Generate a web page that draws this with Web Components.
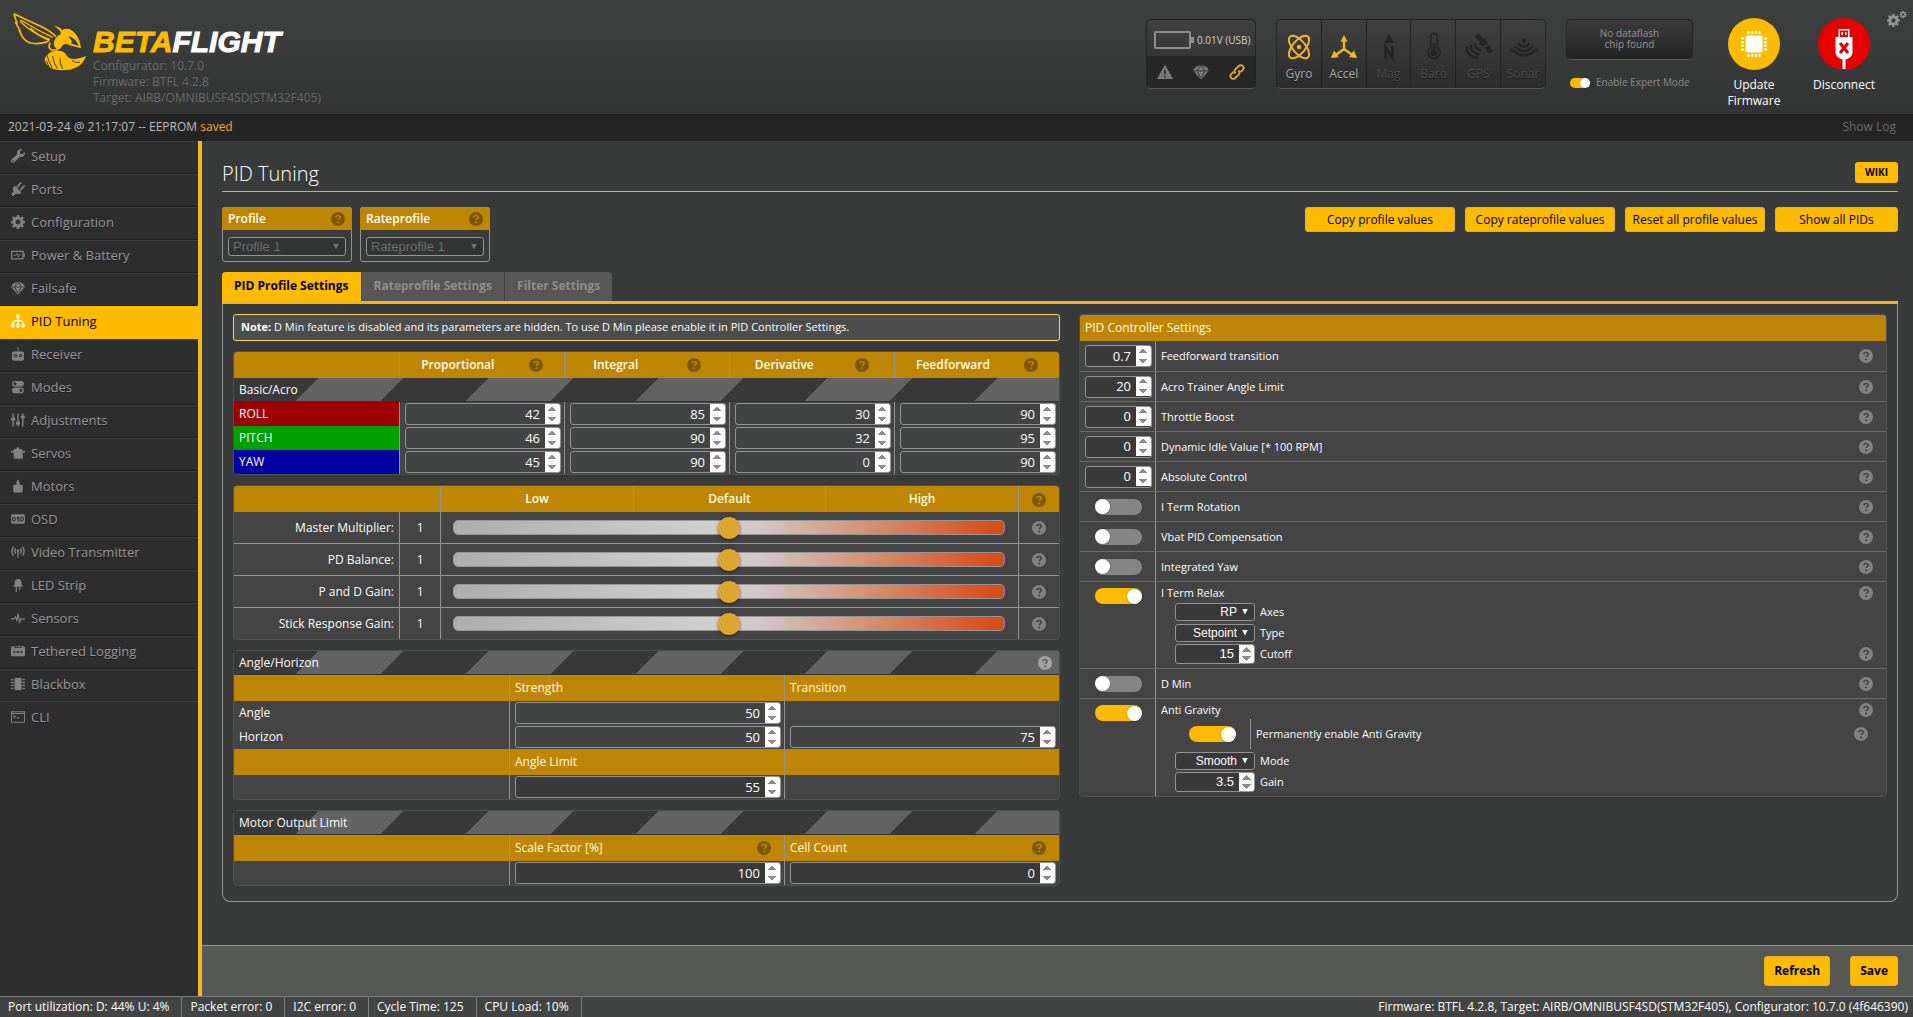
<!DOCTYPE html>
<html lang="en">
<head>
<meta charset="utf-8">
<title>Betaflight Configurator</title>
<style>
  html { background: #393b3a; }
  body {
    margin: 0; min-height: 100vh; display: flex; flex-direction: column;
    font-family: "Open Sans", "Noto Sans", sans-serif; font-size: 12px; line-height: 16px; color: #fff;
    --accent: #ffbb00; --gold: #bf8605; --line: #949494;
  }
  .middle { flex: 1; display: flex; }
  .content { flex: 1; min-width: 0; display: flex; flex-direction: column; }
  bf-pid-tab { flex: 1; }
</style>
</head>
<body>
  <bf-header></bf-header>
  <bf-log><span>2021-03-24 @ 21:17:07 -- EEPROM <span style="color:#ffa834">saved</span></span></bf-log>
  <div class="middle">
    <bf-sidebar active="PID Tuning"></bf-sidebar>
    <main class="content">
      <bf-pid-tab></bf-pid-tab>
      <bf-toolbar></bf-toolbar>
    </main>
  </div>
  <bf-status></bf-status>

<script>
const ICONS = {
  wrench: '<path fill="currentColor" d="M15.6 3.5 13 6.100l-2.300-.6-.6-2.300L12.700.600C10.700-.2 8.300.5 7.200 2.500c-.6 1.100-.6 2.300-.2 3.400L.8 11.800a2 2 0 0 0 0 3.200 2 2 0 0 0 3 0L10 9c2.500.8 5.200-.7 5.800-3.200.2-.8.1-1.600-.2-2.300zM2.400 14.400a.9.900 0 1 1 0-1.800.9.900 0 0 1 0 1.800z"/>',
  plug: '<path fill="currentColor" d="M4 4 12 12c-1.500 1.800-4.300 2.400-6.500 1.300L3 15.700 2 16l-2-2 2.800-3C1.500 8.500 2 6 4 4z"/><path stroke="currentColor" stroke-width="2" stroke-linecap="round" d="M7 6l4-5M11 9l4-4.500"/>',
  cog: '<path fill="currentColor" fill-rule="evenodd" d="M6.700 0h2.600l.4 2.200 1.400.6L13 1.500 14.700 3.200l-1.300 1.800.6 1.500 2.100.3v2.500l-2.100.4-.6 1.400 1.300 1.900-1.800 1.700-1.800-1.300-1.400.6-.4 2.100H6.700L6.300 14l-1.400-.6L3 14.700 1.300 13l1.300-1.900L2 9.700l-2.100-.4V6.800L2 6.500 2.600 5 1.300 3.200 3 1.500l1.900 1.300 1.400-.6zM8 5.200A2.800 2.800 0 1 0 8 10.800 2.800 2.800 0 0 0 8 5.200z"/>',
  battery: '<path fill="none" stroke="currentColor" stroke-width="1.500" d="M.8 3.800h12.800v8.600H.8zM15.200 6v4"/><path fill="none" stroke="currentColor" d="M3 8.500h2.200L6.500 6l1.700 4 1.300-2.500h2"/>',
  chute: '<path fill="currentColor" d="M.5 7C.5 3.800 4 1.500 8 1.500S15.500 3.800 15.500 7L8.700 15H7.300z"/><path stroke="#2e2e2e" stroke-width=".9" fill="none" d="M1 7.500q2-2 3.600 0 1.700-2 3.400 0 1.700-2 3.400 0Q13 5.500 15 7.500M4.600 7.500 7.500 14M11.400 7.500 8.500 14M4.600 7Q5 3 8 2M11.400 7Q11 3 8 2"/>',
  tree: '<g fill="none" stroke="currentColor" stroke-width="1.500"><circle cx="8" cy="2.500" r="1.600"/><circle cx="2.200" cy="13.400" r="1.500"/><circle cx="8" cy="13.400" r="1.500"/><circle cx="13.800" cy="13.400" r="1.500"/><path d="M8 4v8M2.300 12V9.500L5 7.500h6l2.700 2V12"/></g>',
  receiver: '<path fill="currentColor" fill-rule="evenodd" d="M7.400 0h1.200v5H13q1.800 0 1.800 1.800V14q0 1.600-1.800 1.600H3Q1.200 15.600 1.200 14V6.800Q1.200 5 3 5h4.400zM5 8a2 2 0 1 0 0 4 2 2 0 0 0 0-4zm6 0a2 2 0 1 0 0 4 2 2 0 0 0 0-4z"/><circle cx="5" cy="10" r=".9" fill="currentColor"/><circle cx="11" cy="10" r=".9" fill="currentColor"/>',
  modes: '<path fill="currentColor" fill-rule="evenodd" d="M4.500 1h7a3.200 3.200 0 0 1 0 6.500h-7a3.200 3.200 0 0 1 0-6.500zm0 1.500a1.700 1.700 0 1 0 0 3.400 1.700 1.700 0 0 0 0-3.400zM4.500 8.700h7a3.200 3.200 0 0 1 0 6.500h-7a3.200 3.200 0 0 1 0-6.500zm7 1.500a1.700 1.700 0 1 0 0 3.400 1.700 1.700 0 0 0 0-3.400z"/>',
  sliders: '<path stroke="currentColor" stroke-width="1.600" d="M2.500.5v15M8 .5v15M13.500.5v15"/><path fill="currentColor" d="M.2 5.500h4.600v3H.2zM5.700 10h4.600v3H5.700zM11.200 3h4.600v3h-4.600z"/>',
  servo: '<path fill="currentColor" d="M6.500 1.500h2l1 2h3V5.500H16v2h-2.500V13q0 1.500-1.500 1.500H4.500Q3 14.500 3 13V7.500H0v-2h3v-2h3z"/>',
  motor: '<path fill="currentColor" d="M8 .500 9.800 3.500V6.500H12q1.400 0 1.400 1.500v5.500Q13.400 15.500 12 15.500H4q-1.400 0-1.400-1.500V8q0-1.500 1.400-1.500h2.200v-3z"/>',
  osd: '<path fill="currentColor" d="M2 2.500h12q2 0 2 2v7q0 2-2 2H2q-2 0-2-2v-7q0-2 2-2z"/><g fill="none" stroke="#2e2e2e" stroke-width="1.200"><rect x="1.800" y="6" width="3" height="4.200" rx="1.300"/><path d="M9.500 6.200H7.200v1.600h2v2.400H6.800M11.500 6h1.200q1.600.3 1.600 2.100t-1.600 2.100h-1.200z"/></g>',
  antenna: '<g fill="none" stroke="currentColor" stroke-width="1.500"><path d="M3 2Q-1 7 3 12.500M13 2q4 5 0 10.500M5.300 4Q3 7 5.300 10.200M10.700 4q2.300 3 0 6.200M8 7v7.500"/></g><circle cx="8" cy="6.500" r="1.500" fill="currentColor"/>',
  led: '<path fill="currentColor" d="M4 5.500a4 4.500 0 0 1 8 0V8h1v2H3V8h1z"/><path stroke="currentColor" stroke-width="1.300" d="M6 10v6M10 10v4"/>',
  pulse: '<path fill="none" stroke="currentColor" stroke-width="1.300" d="M0 9h3.500l1.700-2.500 1.600 5L8 3l2 10 1.600-4H16"/>',
  logging: '<path fill="currentColor" fill-rule="evenodd" d="M0 3.500 1.500 2.500H4v2h8v-2h2.500L16 3.500v9q0 1.500-1.500 1.500h-13Q0 14 0 12.500zM3 8v2h2V8zm3.500 0v2h3V8zM11 8v2h2V8z"/><path fill="currentColor" d="M5.200 2h1.300v1.700H5.200zM7.500 2H11v1.700H7.500z"/>',
  chip: '<path fill="currentColor" d="M4 1h8v14H4z"/><path stroke="currentColor" stroke-width="1.500" d="M0 3h3M0 6.300h3M0 9.600h3M0 13h3M13 3h3M13 6.300h3M13 9.600h3M13 13h3"/>',
  cli: '<path fill="none" stroke="currentColor" stroke-width="1.200" d="M.6 2h14.800v12H.6zM.6 4h14.800M3 5.800l2 1.700-2 1.700M6.500 9h3"/>',
  warn: '<path fill="currentColor" fill-rule="evenodd" d="M8 .8 16 15H0zM7.200 6v4.800h1.600V6zm0 6v1.600h1.600V12z"/>',
  link: '<g fill="none" stroke="currentColor" stroke-width="1.800"><path d="M6.500 9.500C5 8 5.300 6.500 6.500 5.200L9.800 2c1.300-1.300 3-1.200 4 0s1.100 2.700 0 3.900L11.500 8.200"/><path d="M9.500 6.500C11 8 10.700 9.500 9.500 10.800L6.200 14c-1.300 1.300-3 1.200-4 0s-1.100-2.700 0-3.900L4.500 7.800"/></g>',
  gyro: '<g fill="none" stroke="currentColor" stroke-width="1.400"><ellipse cx="8" cy="8" rx="10" ry="4.600" transform="rotate(50 8 8)"/><ellipse cx="8" cy="8" rx="10" ry="4.600" transform="rotate(-50 8 8)"/></g><circle cx="8" cy="8" r="1.600" fill="currentColor"/>',
  accel: '<path fill="none" stroke="currentColor" stroke-width="1.700" d="M8 3v6.500L2.500 13.500M8 9.500l5.500 4"/><path fill="currentColor" d="M8-.8l2.500 5h-5zM-1.600 16l2.500-5.500 3.400 5zM17.600 16l-2.500-5.500-3.400 5z"/>',
  mag: '<path fill="currentColor" d="M8-2l3.500 7H4.500z"/><path fill="none" stroke="currentColor" stroke-width="1.900" d="M5.500 17V8.500L10.500 16V7.500"/>',
  baro: '<path fill="none" stroke="currentColor" stroke-width="1.300" d="M5.600 8.500V.5a2.400 2.400 0 0 1 4.800 0v8a4.300 4.300 0 1 1-4.800 0z"/><circle cx="8" cy="12.200" r="2.600" fill="currentColor"/><path stroke="currentColor" stroke-width="1.600" d="M8 5v6"/>',
  gps: '<path fill="currentColor" d="M4.500 0 8-1.500l3 3.500L8.800 4.200zM9 3.500 12.500 1.500 14.500 6 10 7.500 8 5.500zM12 8l3.500-1L18 11.500l-3 1z"/><g fill="none" stroke="currentColor" stroke-width="1.700"><path d="M5 5.500Q5 9.500 9.500 10.500M2 6.500q0 6 6.500 7M-1 7.500q0 8 8.500 8.500"/></g>',
  sonar: '<circle cx="8" cy="3.500" r="1.500" fill="currentColor"/><g fill="none" stroke="currentColor" stroke-width="1.900"><path d="M4.200 5.500Q8 10 11.800 5.500M1.500 7.500q6.500 7 13 0M-1.500 9.500q9.500 9 19 0"/></g>'
};
const svg = (name, size) => `<svg viewBox="0 0 16 16" width="${size}" height="${size}" overflow="visible" aria-hidden="true">${ICONS[name]}</svg>`;

/* Base class: renders the subclass markup and styles into an open shadow root. */
class BfElement extends HTMLElement {
  connectedCallback() {
    if (this.shadowRoot) return;
    const root = this.attachShadow({ mode: 'open' });
    const t = document.createElement('template');
    t.innerHTML = `<style>:host,*{box-sizing:border-box}${this.css()}</style>${this.html()}`;
    root.append(t.content.cloneNode(true));
  }
}

const CONTROLS = `
  button { font: inherit; color: #000; background: var(--accent); border: 1px solid #e8b028; border-radius: 3px; margin: 0; padding: 0; cursor: pointer; }
  input[type=number] {
    display: block; width: 100%; height: 22px; margin: 0; padding: 0 0 1px 4px;
    font: 13px/19px "Open Sans", sans-serif; color: #fff; text-align: right;
    background: #424443; border: 1px solid var(--line); border-radius: 3px; outline: none;
  }
  input[type=number].dark { background: #393939; }
  input[type=number]::-webkit-inner-spin-button { opacity: 1; margin-left: 5px; height: 20px; }
  .pick { display: inline-grid; align-items: center; }
  .pick > * { grid-area: 1 / 1; }
  .pick::after { content: ""; grid-area: 1 / 1; justify-self: end; width: 6px; height: 6px; margin-right: 7px; background: var(--arrow, #fff); clip-path: polygon(0 0, 100% 0, 50% 100%); pointer-events: none; }
  select { appearance: none; width: 100%; margin: 0; font-family: "Liberation Sans", Arial, sans-serif; color: #fff; background: #393939; border: 1px solid var(--line); border-radius: 3px; opacity: 1; }
`;

/* Round question mark badge. */
customElements.define('bf-help', class extends BfElement {
  css() { return `
    :host { display: inline-block; width: 14px; height: 14px; flex: none; color: #828282; --mark: #434443; }
    :host([tone=gold]) { color: #7c5603; --mark: #bf8605; }
    :host([tone=light]) { color: #a3a3a3; --mark: #5f5f5f; }
    svg { display: block; }`; }
  html() { return `<svg viewBox="0 0 14 14" width="14" height="14" role="img" aria-label="Help"><circle cx="7" cy="7" r="7" fill="currentColor"/><path d="M4.900 5.400C5 4.100 5.900 3.500 7 3.500s2.200.6 2.200 1.700c0 1.400-1.900 1.400-1.900 2.900" fill="none" stroke="var(--mark)" stroke-width="1.700"/><circle cx="7.200" cy="10.300" r="1.100" fill="var(--mark)"/></svg>`; }
});

/* On/off switch built on a real checkbox. */
customElements.define('bf-toggle', class extends BfElement {
  css() { return `
    :host { display: inline-block; width: 47px; height: 16px; flex: none; --knob: 15px; }
    :host([small]) { width: 20px; height: 10px; --knob: 10px; }
    input { appearance: none; display: flex; align-items: center; width: 100%; height: 100%; margin: 0; border-radius: 8px; background: #858585; cursor: pointer; }
    input::before { content: ""; width: var(--knob); height: var(--knob); border-radius: 50%; background: #fff; box-shadow: 0 0 2px #0006; }
    input:checked { background: var(--accent); justify-content: flex-end; }`; }
  html() { return `<input type="checkbox" aria-label="${this.getAttribute('label')}" ${this.hasAttribute('on') ? 'checked' : ''}>`; }
});

customElements.define('bf-header', class extends BfElement {
  css() { return `
    :host { display: flex; height: 114px; background: linear-gradient(#3f4140, #333534); color: #949494; }
    .brand { display: flex; padding: 12px 0 0 12px; flex: 1; }
    .name { padding-left: 5px; color: #6a6a6a; }
    .word { font: italic bold 30px/32px "Liberation Sans", Arial, sans-serif; color: #fff; -webkit-text-stroke: 1px; margin-top: 14px; }
    .word b { color: var(--accent); }
    .info { display: flex; gap: 20px; padding-top: 19px; }
    .box { border: 1px solid #252525; border-bottom-color: #5a5a5a; border-radius: 5px; background: linear-gradient(#414141, #2c2c2c); overflow: hidden; }
    .power { width: 110px; height: 70px; display: flex; flex-direction: column; }
    .volts { flex: 1; display: flex; align-items: center; gap: 3px; padding: 4px 0 0 7px; font-size: 10px; color: #d0d0d0; white-space: nowrap; }
    .flags { height: 32px; display: flex; align-items: center; justify-content: space-around; background: #272727; color: #7a7a7a; }
    .flags svg:last-child { color: #e0ac26; }
    .sensors { width: 270px; height: 70px; display: flex; }
    .sensor { flex: 1; display: flex; flex-direction: column; align-items: center; gap: 8px; padding-top: 16px; border-left: 1px solid #222; color: #242424; }
    .sensor:first-child { border: 0; }
    .sensor svg { margin: 0 0 0 1px; }
    .sensor span { color: #4c4c4c; text-shadow: 0 1px #1c1c1c; }
    .sensor.on { color: #f0b72b; }
    .sensor.on span { color: #adadad; }
    .flash { width: 127px; font-size: 10px; line-height: 11px; text-align: center; }
    .flash .box { height: 41px; padding-top: 8px; color: #949494; background: linear-gradient(#3c3c3c, #222); }
    .expert { display: flex; align-items: center; gap: 6px; padding: 17px 0 0 4px; white-space: nowrap; color: #8c8c8c; }
    .acts { display: flex; gap: 30px; padding: 18px 0 0 31px; align-items: flex-start; }
    .acts button { width: 60px; padding: 0; border: 0; background: none; font: inherit; color: #fff; display: flex; flex-direction: column; align-items: center; gap: 7px; cursor: pointer; }
    .gears { padding: 11px 6px 0 13px; color: #949494; }`; }
  html() {
    const sensors = [['gyro','Gyro',1],['accel','Accel',1],['mag','Mag'],['baro','Baro'],['gps','GPS'],['sonar','Sonar']];
    return `
    <div class="brand">
      <svg width="76" height="60" viewBox="36 36 228 180" aria-hidden="true" fill="none" stroke="#ffbb00" stroke-width="5" stroke-linejoin="round">
        <path d="M42 41L51 70L47 68L60 92L58 92L68 112Q80 127 92 129Q122 134 146 124M42 41Q76 58 112 74Q150 90 168 110"/>
        <path stroke-width="4" d="M60 64Q92 96 148 122M62 60Q110 90 158 112M92 84Q112 108 150 118"/>
        <path stroke="none" fill="#ffbb00" d="M162 77Q180 80 186 90Q206 80 224 98Q240 116 243 145L209 136Q196 128 187 137Q180 152 169 146Q158 136 163 122Q169 108 182 102Q186 94 162 77Z"/>
        <path stroke="none" fill="#393b3a" d="M204 109Q226 112 236 138L212 130Q222 126 204 109Z"/>
        <path d="M151 128Q142 142 154 150L174 150"/>
        <path stroke="none" fill="#ffbb00" d="M134 178Q142 152 172 152Q194 152 201 168Q214 186 258 168Q244 212 182 211Q138 208 134 178Z"/>
        <path stroke="#393b3a" stroke-width="3" d="M140 164Q146 184 156 203M158 168Q160 190 172 206M180 176Q178 190 188 206M139 182L148 203M216 181Q224 190 240 187"/>
      </svg>
      <div class="name">
        <div class="word"><b>BETA</b>FLIGHT</div>
        <div>Configurator: 10.7.0</div><div>Firmware: BTFL 4.2.8</div><div>Target: AIRB/OMNIBUSF4SD(STM32F405)</div>
      </div>
    </div>
    <div class="info">
      <div class="box power">
        <div class="volts"><svg width="40" height="18" viewBox="0 0 40 18"><rect x="1" y="1" width="35" height="16" rx="1" fill="none" stroke="#8c8c8c" stroke-width="2"/><path fill="#8c8c8c" d="M37 6h3v6h-3z"/></svg>0.01V (USB)</div>
        <div class="flags">${svg('warn',16)}${svg('chute',16)}${svg('link',16)}</div>
      </div>
      <div class="box sensors">${sensors.map(([i,n,on]) => `<div class="sensor ${on ? 'on' : ''}">${svg(i,22)}<span>${n}</span></div>`).join('')}</div>
      <div class="flash">
        <div class="box">No dataflash<br>chip found</div>
        <div class="expert"><bf-toggle small on label="Enable Expert Mode"></bf-toggle><span>Enable Expert Mode</span></div>
      </div>
    </div>
    <div class="acts">
      <button type="button"><svg width="52" height="52" viewBox="0 0 52 52"><circle cx="26" cy="26" r="26" fill="#ffbb00"/><rect x="17.500" y="17.500" width="17" height="17" rx="2" fill="#fff"/><path stroke="#fff" stroke-width="2" d="M20.500 13v3M24.200 13v3M27.800 13v3M31.500 13v3M20.500 36v3M24.200 36v3M27.800 36v3M31.500 36v3M13 20.500h3M13 24.200h3M13 27.800h3M13 31.500h3M36 20.500h3M36 24.200h3M36 27.800h3M36 31.500h3"/></svg><span>Update<br>Firmware</span></button>
      <button type="button"><svg width="52" height="52" viewBox="0 0 52 52"><circle cx="26" cy="26" r="26" fill="#e60000"/><path fill="#fff" d="M20.500 11h11v8h3v16q-1 5-7 6.500V51h-3v-9.500q-6-1.500-7-6.500V19h3z"/><path fill="#e60000" d="M22 12.500h8V19h-8z"/><path fill="#fff" d="M23.500 14h1.500v3h-1.500zM27 14h1.500v3H27z"/><path stroke="#e60000" stroke-width="3" d="M22 25l8 10M30 25l-8 10"/></svg><span>Disconnect</span></button>
    </div>
    <div class="gears"><svg width="20" height="16" viewBox="0 0 20 16"><g transform="translate(0 3) scale(.8)">${ICONS.cog}</g><g transform="translate(12.500 0) scale(.45)">${ICONS.cog}</g></svg></div>`;
  }
});

customElements.define('bf-log', class extends BfElement {
  css() { return `
    :host { display: flex; justify-content: space-between; align-items: center; height: 27px; padding: 0 17px 2px 8px; background: #242424; color: #bdbdbd; }
    a { color: #6b6b6b; text-decoration: none; }`; }
  html() { return `<slot></slot><a href="#log">Show Log</a>`; }
});

customElements.define('bf-sidebar', class extends BfElement {
  css() { return `
    :host { display: block; width: 202px; flex: none; background: #2e2e2e; border-right: 4px solid #f5b91c; }
    ul { list-style: none; margin: 0; padding: 0; }
    a { display: flex; align-items: center; gap: 6px; height: 33px; padding: 0 0 3px 11px; font-size: 13px; color: #999; text-decoration: none; text-shadow: 0 1px #1a1a1a; border-top: 1px solid #3d3d3d; border-bottom: 1px solid #1f1f1f; }
    svg { color: #828282; }
    a[aria-current] { background: var(--accent); border-color: var(--accent); color: #000; text-shadow: none; margin-right: -4px; }
    a[aria-current] svg { color: #fff; }
    li:nth-last-child(2) a { height: 32px; border-bottom: 0; }
    li:last-child a { border-bottom: 0; }`; }
  html() {
    const items = [['wrench','Setup'],['plug','Ports'],['cog','Configuration'],['battery','Power &amp; Battery'],['chute','Failsafe'],['tree','PID Tuning'],['receiver','Receiver'],['modes','Modes'],['sliders','Adjustments'],['servo','Servos'],['motor','Motors'],['osd','OSD'],['antenna','Video Transmitter'],['led','LED Strip'],['pulse','Sensors'],['logging','Tethered Logging'],['chip','Blackbox'],['cli','CLI']];
    return `<nav><ul>${items.map(([i,n]) => `<li><a href="#" ${n === this.getAttribute('active') ? 'aria-current="page"' : ''}>${svg(i,14)}${n}</a></li>`).join('')}</ul></nav>`;
  }
});

/* Rounded frame for a table. */
customElements.define('bf-panel', class extends BfElement {
  css() { return `:host { display: block; border: 1px solid #4f504f; border-radius: 4px; background: #434443; overflow: hidden; }`; }
  html() { return `<slot></slot>`; }
});

/* One row of the controller settings list. */
customElements.define('bf-setting', class extends BfElement {
  css() { return CONTROLS + `
    :host { display: flex; min-height: 30px; border-bottom: 1px solid #6b6b6b; font-size: 11px; }
    :host(:last-child) { border-bottom: 0; }
    .control { width: 75px; flex: none; display: flex; align-items: center; justify-content: center; padding: 0 3px 0 5px; }
    .body { flex: 1; border-left: 1px solid var(--line); padding-left: 5px; display: flex; flex-direction: column; justify-content: center; }
    .line { display: flex; align-items: center; justify-content: space-between; padding-right: 13px; }
    :host([expanded]) .control { align-items: flex-start; padding-top: 6px; }
    :host([expanded]) .body { justify-content: flex-start; padding-top: 3px; }
    :host([first]) { min-height: 31px; }`; }
  html() {
    const label = this.getAttribute('label'), value = this.getAttribute('value');
    const control = value !== null
      ? `<input class="dark" id="v" type="number" step="any" value="${value}">`
      : `<bf-toggle label="${label}" ${this.hasAttribute('on') ? 'on' : ''}></bf-toggle>`;
    return `<div class="control">${control}</div><div class="body"><div class="line"><label for="v">${label}</label><bf-help></bf-help></div><slot></slot></div>`;
  }
});

customElements.define('bf-pid-tab', class extends BfElement {
  css() { return CONTROLS + `
    :host { display: block; padding: 20px 15px 42px 20px; background: #393b3a; }
    header { display: flex; justify-content: space-between; align-items: flex-start; height: 31px; border-bottom: 1px solid #e3b030; padding-top: 1px; }
    h1 { margin: 0; font-size: 20px; font-weight: 300; line-height: 23px; }
    header a { display: block; height: 21px; padding: 0 10px; border-radius: 3px; background: var(--accent); color: #000; font: bold 10px/21px "Open Sans", sans-serif; text-decoration: none; }
    .top { display: flex; justify-content: space-between; align-items: flex-start; padding: 15px 0 10px; }
    .group { display: flex; gap: 8px; }
    .profile { width: 130px; height: 55px; border: 1px solid var(--line); border-radius: 3px; }
    .profile > div { display: flex; align-items: center; justify-content: space-between; height: 23px; margin: -1px -1px 0; padding: 0 7px 0 6px; background: var(--gold); border-radius: 3px 3px 0 0; font-weight: 600; }
    .profile .pick { display: grid; margin: 7px 5px 0; --arrow: #777; }
    .profile select { height: 19px; font-size: 13px; color: #6e6e6e; padding: 0 4px; background: #333534; }
    .actions { display: flex; gap: 10px; }
    .actions button { height: 25px; width: 150px; }
    .actions button:nth-child(3) { width: 140px; }
    .actions button:nth-child(4) { width: 123px; }
    .tabs { display: flex; border-bottom: 3px solid #efb52a; }
    .tabs button { height: 29px; padding: 0 12px 1px; border: 0; border-left: 1px solid #3d3f3e; border-radius: 0; font-weight: bold; background: #565756; color: #8e8e8e; }
    .tabs button[aria-selected] { background: var(--accent); color: #000; border-radius: 4px 0 0 0; border-left: 0; }
    .tabs button:last-child { border-radius: 0 4px 0 0; }
    .box { display: flex; padding: 10px 10px 15px; border: 1px solid var(--line); border-top: 0; border-radius: 0 0 8px 8px; }
    .left { flex: 1 1 50%; display: flex; flex-direction: column; gap: 10px; }
    .right { flex: 1 1 50%; padding-left: 19px; }
    .note { height: 27px; padding: 0 7px; line-height: 24px; font-size: 11px; border: 1px solid #f5d967; border-radius: 3px; background: #4d4d4d; }
    table { width: 100%; border-collapse: separate; border-spacing: 0; table-layout: fixed; }
    th, td { padding: 0; text-align: left; font-weight: 400; }
    th { height: 26px; background: var(--gold); font-weight: 400; color: #fffbe6; }
    .axes th, .mult th { font-weight: 600; }
    th + th, td + td { border-left: 1px solid var(--line); padding-left: 5px; }
    td { height: 24px; padding-right: 3px; }
    td:first-child { padding-left: 5px; }
    .stripe td { background: repeating-linear-gradient(135deg, #393939 0 60px, #636363 60px 120px); border-bottom: 1px solid #333; }
    .stripe div, .split { display: flex; justify-content: space-between; align-items: center; padding-right: 4px; }
    .split { padding-right: 13px; }
    .around { display: flex; justify-content: space-around; align-items: center; }
    .around bf-help { margin-left: -8px; }
    .axes th + th { padding: 0; }
    .c, .mult th { text-align: center; }
    .mult th + th, .mult td + td { padding: 0; }
    .mult tbody td { height: 32px; border-bottom: 1px solid var(--line); }
    .mult tbody tr:last-child td { height: 31px; border-bottom: 0; }
    .mult .r { text-align: right; padding-right: 5px; }
    .mult bf-help { vertical-align: middle; }
    input[type=range] { appearance: none; display: block; width: calc(100% - 25px); height: 15px; margin: 0 12px; border: 1px solid var(--line); border-radius: 5px; background: linear-gradient(90deg, #adadad, #cfcfcf 45%, #d0cac6 55%, #d84e17 98%); }
    input[type=range]::-webkit-slider-thumb { appearance: none; width: 22px; height: 22px; border-radius: 50%; background: #dba730; box-shadow: 0 1px 3px #0008; }
    .head { height: 26px; line-height: 26px; padding-left: 5px; background: var(--gold); color: #fffbe6; }
    .sub { display: grid; grid-template-columns: 80px 1fr; column-gap: 5px; align-items: center; padding: 0 13px 0 14px; }
    .sub.sel { height: 21px; }
    .sub.num { height: 22px; }
    .sub.num input { height: 20px; font: 13px/18px "Liberation Sans", Arial, sans-serif; }
    .sub.num input::-webkit-inner-spin-button { height: 18px; }
    .sub select { height: 18px; padding: 0 17px 0 2px; font-size: 12px; text-align-last: right; }
    .sub > div { display: flex; justify-content: space-between; align-items: center; height: 20px; }
    .always { display: flex; align-items: center; height: 30px; margin: 1px 0; padding: 0 18px 0 28px; }
    .always > span { flex: 1; height: 30px; line-height: 30px; margin-left: 14px; padding-left: 5px; border-left: 1px solid var(--line); }
    .tail { padding-bottom: 3px; }`; }
  html() {
    const num = (v, name, dark) => `<input type="number" value="${v}" aria-label="${name}" ${dark ? 'class="dark"' : ''}>`;
    const cols = ['Proportional', 'Integral', 'Derivative', 'Feedforward'];
    const axes = [['ROLL','#9e0000',[42,85,30,90]],['PITCH','#00a000',[46,90,32,95]],['YAW','#0000a0',[45,90,0,90]]];
    const g = '<bf-help tone="gold"></bf-help>';
    return `
    <header><h1>PID Tuning</h1><a href="#wiki">WIKI</a></header>
    <div class="top">
      <div class="group">
        <div class="profile"><div><label for="p">Profile</label>${g}</div><span class="pick"><select id="p" disabled><option>Profile 1</option></select></span></div>
        <div class="profile"><div><label for="rp">Rateprofile</label>${g}</div><span class="pick"><select id="rp" disabled><option>Rateprofile 1</option></select></span></div>
      </div>
      <div class="actions"><button>Copy profile values</button><button>Copy rateprofile values</button><button>Reset all profile values</button><button>Show all PIDs</button></div>
    </div>
    <div class="tabs" role="tablist"><button role="tab" aria-selected="true">PID Profile Settings</button><button role="tab">Rateprofile Settings</button><button role="tab">Filter Settings</button></div>
    <div class="box">
      <div class="left">
        <div class="note"><b>Note:</b> D Min feature is disabled and its parameters are hidden. To use D Min please enable it in PID Controller Settings.</div>
        <bf-panel><table class="axes">
          <thead><tr><th></th>${cols.map(c => `<th><div class="around"><span>${c}</span>${g}</div></th>`).join('')}</tr></thead>
          <tbody><tr class="stripe"><td colspan="5">Basic/Acro</td></tr>
          ${axes.map(([n,c,v]) => `<tr><td style="background:${c}">${n}</td>${v.map((x,i) => `<td>${num(x, n + ' ' + cols[i])}</td>`).join('')}</tr>`).join('')}</tbody>
        </table></bf-panel>
        <bf-panel class="mult">
          <table><colgroup><col style="width:25%"><col><col><col><col style="width:5%"></colgroup><thead><tr><th></th><th>Low</th><th>Default</th><th>High</th><th>${g}</th></tr></thead></table>
          <table><colgroup><col style="width:20%"><col style="width:5%"><col><col style="width:5%"></colgroup><tbody>
          ${['Master Multiplier:','PD Balance:','P and D Gain:','Stick Response Gain:'].map((n,i) => `<tr><td class="r"><label for="s${i}">${n}</label></td><td class="c">1</td><td><input id="s${i}" type="range" min="0" max="2" step="0.05" value="1"></td><td class="c"><bf-help></bf-help></td></tr>`).join('')}</tbody></table>
        </bf-panel>
        <bf-panel><table>
          <tbody><tr class="stripe"><td colspan="3"><div>Angle/Horizon<bf-help tone="light"></bf-help></div></td></tr>
          <tr><th></th><th>Strength</th><th>Transition</th></tr>
          <tr><td>Angle</td><td>${num(50,'Angle strength')}</td><td></td></tr>
          <tr><td>Horizon</td><td>${num(50,'Horizon strength')}</td><td>${num(75,'Horizon transition')}</td></tr>
          <tr><th></th><th>Angle Limit</th><th></th></tr>
          <tr><td></td><td>${num(55,'Angle limit',1)}</td><td></td></tr></tbody>
        </table></bf-panel>
        <bf-panel><table>
          <tbody><tr class="stripe"><td colspan="3">Motor Output Limit</td></tr>
          <tr><th></th><th><div class="split">Scale Factor [%]${g}</div></th><th><div class="split">Cell Count${g}</div></th></tr>
          <tr><td></td><td>${num(100,'Scale factor',1)}</td><td>${num(0,'Cell count',1)}</td></tr></tbody>
        </table></bf-panel>
      </div>
      <div class="right">
        <bf-panel>
          <div class="head">PID Controller Settings</div>
          <div>
          <bf-setting first label="Feedforward transition" value="0.7"></bf-setting>
          <bf-setting label="Acro Trainer Angle Limit" value="20"></bf-setting>
          <bf-setting label="Throttle Boost" value="0"></bf-setting>
          <bf-setting label="Dynamic Idle Value [* 100 RPM]" value="0"></bf-setting>
          <bf-setting label="Absolute Control" value="0"></bf-setting>
          <bf-setting label="I Term Rotation"></bf-setting>
          <bf-setting label="Vbat PID Compensation"></bf-setting>
          <bf-setting label="Integrated Yaw"></bf-setting>
          <bf-setting expanded on label="I Term Relax">
            <div class="sub sel"><span class="pick"><select id="ax"><option>RP</option></select></span><label for="ax">Axes</label></div>
            <div class="sub sel"><span class="pick"><select id="ty"><option>Setpoint</option></select></span><label for="ty">Type</label></div>
            <div class="sub num"><input class="dark" id="cu" type="number" value="15"><div><label for="cu">Cutoff</label><bf-help></bf-help></div></div>
            <div class="tail"></div>
          </bf-setting>
          <bf-setting label="D Min"></bf-setting>
          <bf-setting expanded on label="Anti Gravity">
            <div class="always"><bf-toggle on label="Permanently enable Anti Gravity"></bf-toggle><span>Permanently enable Anti Gravity</span><bf-help></bf-help></div>
            <div class="sub sel"><span class="pick"><select id="mo"><option>Smooth</option></select></span><label for="mo">Mode</label></div>
            <div class="sub num"><input class="dark" id="ga" type="number" step="0.1" value="3.5"><div><label for="ga">Gain</label></div></div>
            <div class="tail"></div>
          </bf-setting>
          </div>
        </bf-panel>
      </div>
    </div>`;
  }
});

customElements.define('bf-toolbar', class extends BfElement {
  css() { return CONTROLS + `
    :host { display: flex; justify-content: flex-end; align-items: center; gap: 20px; height: 51px; padding-right: 15px; background: #565856; border-top: 1px solid var(--line); }
    button { height: 30px; padding: 0 9px; font-weight: bold; }`; }
  html() { return `<button>Refresh</button><button>Save</button>`; }
});

customElements.define('bf-status', class extends BfElement {
  css() { return `
    :host { display: flex; height: 21px; border-top: 1px solid #7d7d7d; background: #424443; line-height: 20px; padding: 0 5px 0 0; white-space: nowrap; }
    span { padding: 0 12px 0 8px; border-right: 1px solid #7d7d7d; }
    div { margin-left: auto; }`; }
  html() { return `${['Port utilization: D: 44% U: 4%','Packet error: 0','I2C error: 0','Cycle Time: 125','CPU Load: 10%'].map(t => `<span>${t}</span>`).join('')}<div>Firmware: BTFL 4.2.8, Target: AIRB/OMNIBUSF4SD(STM32F405), Configurator: 10.7.0 (4f646390)</div>`; }
});
</script>
</body>
</html>
